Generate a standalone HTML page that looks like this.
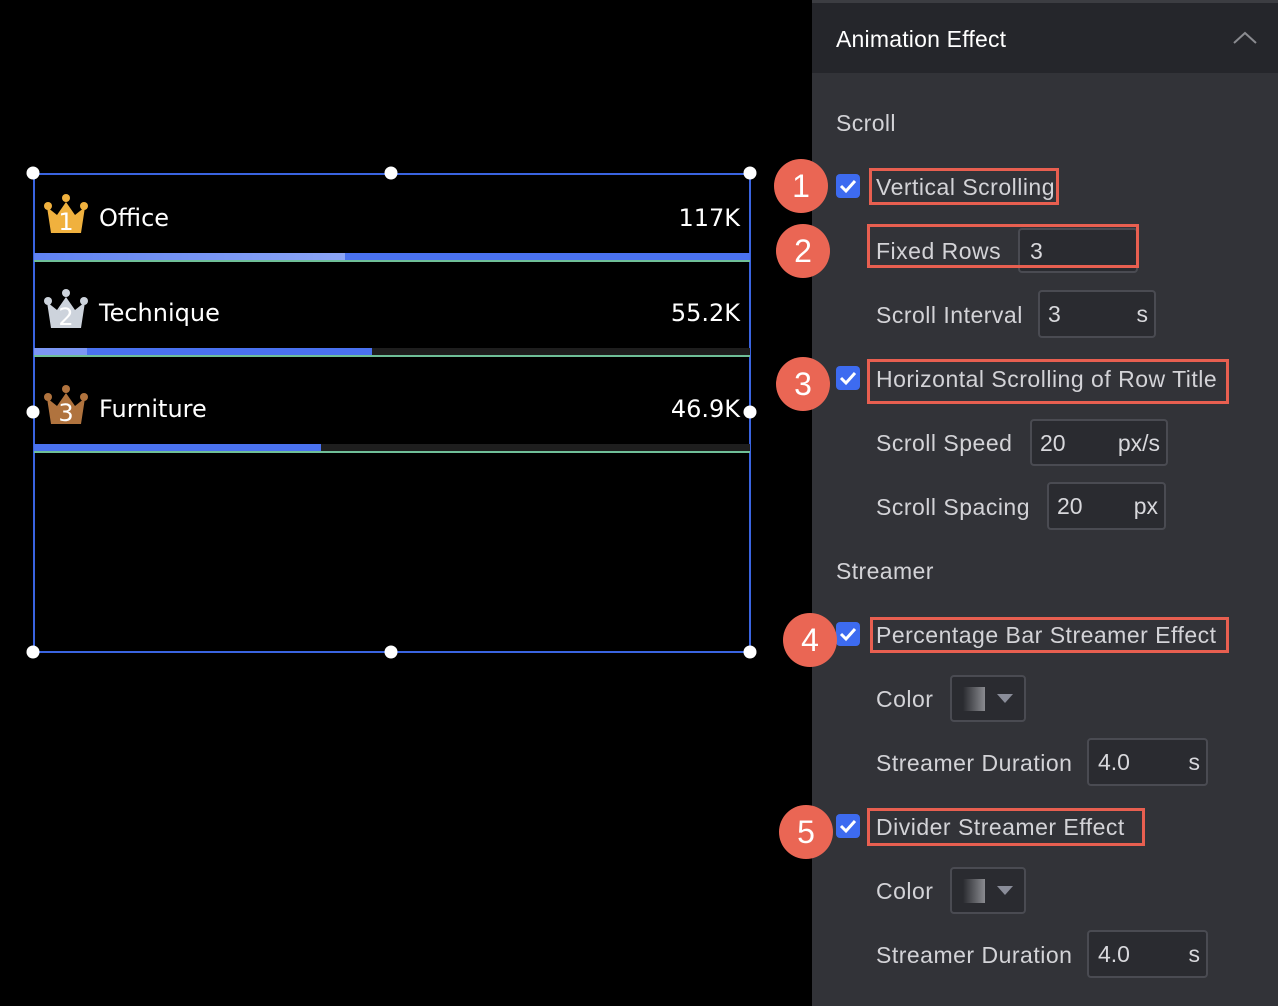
<!DOCTYPE html>
<html><head><meta charset="utf-8"><style>
*{margin:0;padding:0;box-sizing:border-box}
body{width:1278px;height:1006px;background:#000;position:relative;overflow:hidden;font-family:"Liberation Sans",sans-serif}
.a{position:absolute}
.panel{left:812px;top:0;width:466px;height:1006px;background:#323338}
.hdr{left:812px;top:3px;width:466px;height:70px;background:#25262b}
.lbl{position:absolute;color:#d3d3d7;font-size:23px;letter-spacing:0.5px;line-height:26px;white-space:nowrap}
.sec{position:absolute;color:#d3d3d7;font-size:23px;letter-spacing:0.4px;line-height:26px}
.inp{position:absolute;border:2px solid #4a4b52;border-radius:4px;background:#2a2b30;color:#d8d8dc;font-size:23px;line-height:26px}
.inp span{position:absolute;top:50%;transform:translateY(-50%)}
.cb{position:absolute;left:836px;width:24px;height:24px;background:#3d6bf0;border-radius:4px}
.badge{position:absolute;width:54px;height:54px;border-radius:50%;background:#ea6654;color:#fff;font-size:32px;line-height:54px;text-align:center}
.rb{position:absolute;border:3px solid #e85f50}
.row{position:absolute;left:34px;width:716px;color:#fff;font-family:"DejaVu Sans",sans-serif;font-size:24px}
.h{position:absolute;width:13px;height:13px;border-radius:50%;background:#fff;transform:translate(-50%,-50%)}
</style></head><body>
<div class="a" style="left:812px;top:0;width:466px;height:3px;background:#3c3d42"></div>
<div class="a panel" style="top:73px;height:933px"></div>
<div class="a hdr"></div>
<div class="lbl" style="left:836px;top:26px;color:#fff;letter-spacing:0.2px">Animation Effect</div>
<svg class="a" style="left:1232px;top:30px" width="26" height="16"><path d="M2 13 L13 3 L24 13" fill="none" stroke="#8a8b90" stroke-width="2"/></svg>

<div class="sec" style="left:836px;top:110px">Scroll</div>
<div class="sec" style="left:836px;top:558px">Streamer</div>

<svg class="cb" style="top:174px" viewBox="0 0 24 24"><path d="M5 12 L10 17 L19 7" fill="none" stroke="#fff" stroke-width="3"/></svg>
<svg class="cb" style="top:366px" viewBox="0 0 24 24"><path d="M5 12 L10 17 L19 7" fill="none" stroke="#fff" stroke-width="3"/></svg>
<svg class="cb" style="top:622px" viewBox="0 0 24 24"><path d="M5 12 L10 17 L19 7" fill="none" stroke="#fff" stroke-width="3"/></svg>
<svg class="cb" style="top:814px" viewBox="0 0 24 24"><path d="M5 12 L10 17 L19 7" fill="none" stroke="#fff" stroke-width="3"/></svg>

<div class="lbl" style="left:876px;top:174px">Vertical Scrolling</div>
<div class="lbl" style="left:876px;top:238px">Fixed Rows</div>
<div class="inp" style="left:1018px;top:228px;width:120px;height:45px"><span style="left:10px">3</span></div>
<div class="lbl" style="left:876px;top:302px">Scroll Interval</div>
<div class="inp" style="left:1038px;top:290px;width:118px;height:48px"><span style="left:8px">3</span><span style="right:6px">s</span></div>
<div class="lbl" style="left:876px;top:366px">Horizontal Scrolling of Row Title</div>
<div class="lbl" style="left:876px;top:430px">Scroll Speed</div>
<div class="inp" style="left:1030px;top:419px;width:138px;height:47px"><span style="left:8px">20</span><span style="right:6px">px/s</span></div>
<div class="lbl" style="left:876px;top:494px">Scroll Spacing</div>
<div class="inp" style="left:1047px;top:482px;width:119px;height:48px"><span style="left:8px">20</span><span style="right:6px">px</span></div>
<div class="lbl" style="left:876px;top:622px">Percentage Bar Streamer Effect</div>
<div class="lbl" style="left:876px;top:686px">Color</div>
<div class="inp" style="left:950px;top:675px;width:76px;height:47px"><div class="a" style="left:11px;top:10px;width:22px;height:24px;background:linear-gradient(90deg,#2a2b30,#8a8b90)"></div><svg class="a" style="left:44px;top:16px" width="18" height="12"><path d="M1 1 L17 1 L9 10Z" fill="#8a8d99"/></svg></div>
<div class="lbl" style="left:876px;top:750px">Streamer Duration</div>
<div class="inp" style="left:1087px;top:738px;width:121px;height:48px"><span style="left:9px">4.0</span><span style="right:6px">s</span></div>
<div class="lbl" style="left:876px;top:814px">Divider Streamer Effect</div>
<div class="lbl" style="left:876px;top:878px">Color</div>
<div class="inp" style="left:950px;top:867px;width:76px;height:47px"><div class="a" style="left:11px;top:10px;width:22px;height:24px;background:linear-gradient(90deg,#2a2b30,#8a8b90)"></div><svg class="a" style="left:44px;top:16px" width="18" height="12"><path d="M1 1 L17 1 L9 10Z" fill="#8a8d99"/></svg></div>
<div class="lbl" style="left:876px;top:942px">Streamer Duration</div>
<div class="inp" style="left:1087px;top:930px;width:121px;height:48px"><span style="left:9px">4.0</span><span style="right:6px">s</span></div>

<div class="rb" style="left:869px;top:168px;width:190px;height:37px"></div>
<div class="rb" style="left:867px;top:224px;width:272px;height:44px"></div>
<div class="rb" style="left:867px;top:359px;width:362px;height:45px"></div>
<div class="rb" style="left:870px;top:617px;width:359px;height:36px"></div>
<div class="rb" style="left:867px;top:808px;width:278px;height:38px"></div>

<div class="badge" style="left:774px;top:159px">1</div>
<div class="badge" style="left:776px;top:224px">2</div>
<div class="badge" style="left:776px;top:357px">3</div>
<div class="badge" style="left:783px;top:613px">4</div>
<div class="badge" style="left:779px;top:805px">5</div>

<div class="a" style="left:33px;top:173px;width:718px;height:480px;border:2px solid #3a64e0"></div>

<svg class="a" style="left:43px;top:193px" width="46" height="42" viewBox="0 0 46 42"><path d="M4 14 L8 40 L38 40 L42 14 L32 22 L23 9 L14 22Z" fill="#f0b13e"/><circle cx="5" cy="13" r="4" fill="#f0b13e"/><circle cx="41" cy="13" r="4" fill="#f0b13e"/><circle cx="23" cy="5" r="4" fill="#f0b13e"/><text x="23" y="37" fill="#fff" font-size="24" text-anchor="middle" font-family="DejaVu Sans">1</text></svg>
<div class="row" style="top:202px;height:36px"><span class="a" style="left:65px;top:2px">Office</span><span class="a" style="right:10px;top:2px">117K</span></div>
<div class="a" style="left:34px;top:253px;width:716px;height:7px;background:#4a72f0"></div>
<div class="a" style="left:34px;top:253px;width:311px;height:7px;background:linear-gradient(90deg,#5f82f2,#8ca5f5)"></div>
<div class="a" style="left:34px;top:260px;width:716px;height:2px;background:#6fbf98"></div>

<svg class="a" style="left:43px;top:288px" width="46" height="42" viewBox="0 0 46 42"><path d="M4 14 L8 40 L38 40 L42 14 L32 22 L23 9 L14 22Z" fill="#cdd3dc"/><circle cx="5" cy="13" r="4" fill="#cdd3dc"/><circle cx="41" cy="13" r="4" fill="#cdd3dc"/><circle cx="23" cy="5" r="4" fill="#cdd3dc"/><text x="23" y="37" fill="#fff" font-size="24" text-anchor="middle" font-family="DejaVu Sans">2</text></svg>
<div class="row" style="top:297px;height:36px"><span class="a" style="left:65px;top:2px">Technique</span><span class="a" style="right:10px;top:2px">55.2K</span></div>
<div class="a" style="left:34px;top:348px;width:716px;height:7px;background:#1e1e1e"></div>
<div class="a" style="left:34px;top:348px;width:338px;height:7px;background:#4a72f0"></div>
<div class="a" style="left:34px;top:348px;width:53px;height:7px;background:#7c97f4"></div>
<div class="a" style="left:34px;top:355px;width:716px;height:2px;background:#6fbf98"></div>

<svg class="a" style="left:43px;top:384px" width="46" height="42" viewBox="0 0 46 42"><path d="M4 14 L8 40 L38 40 L42 14 L32 22 L23 9 L14 22Z" fill="#b0733e"/><circle cx="5" cy="13" r="4" fill="#b0733e"/><circle cx="41" cy="13" r="4" fill="#b0733e"/><circle cx="23" cy="5" r="4" fill="#b0733e"/><text x="23" y="37" fill="#fff" font-size="24" text-anchor="middle" font-family="DejaVu Sans">3</text></svg>
<div class="row" style="top:393px;height:36px"><span class="a" style="left:65px;top:2px">Furniture</span><span class="a" style="right:10px;top:2px">46.9K</span></div>
<div class="a" style="left:34px;top:444px;width:716px;height:7px;background:#1e1e1e"></div>
<div class="a" style="left:34px;top:444px;width:287px;height:7px;background:#4a72f0"></div>
<div class="a" style="left:34px;top:451px;width:716px;height:2px;background:#6fbf98"></div>

<div class="h" style="left:33px;top:173px"></div><div class="h" style="left:391px;top:173px"></div><div class="h" style="left:750px;top:173px"></div>
<div class="h" style="left:33px;top:412px"></div><div class="h" style="left:750px;top:412px"></div>
<div class="h" style="left:33px;top:652px"></div><div class="h" style="left:391px;top:652px"></div><div class="h" style="left:750px;top:652px"></div>
</body></html>
